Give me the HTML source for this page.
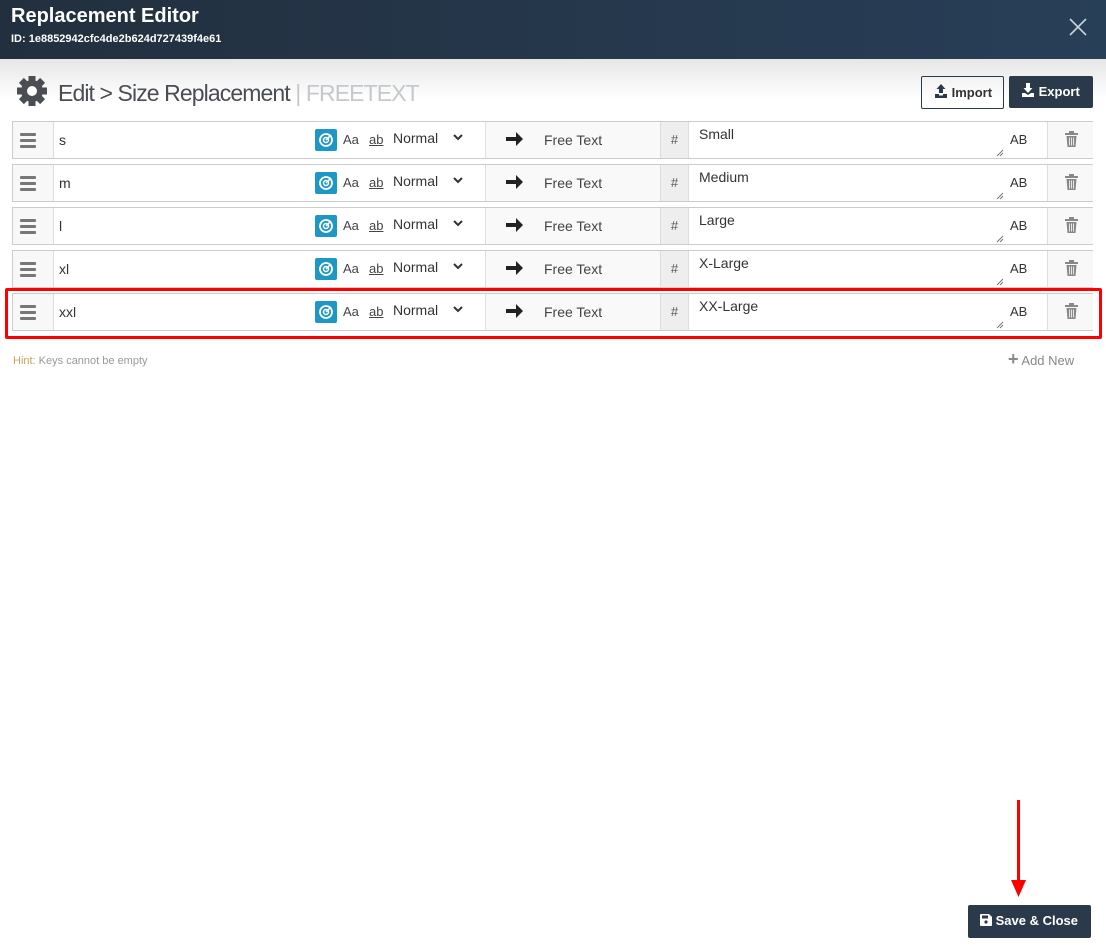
<!DOCTYPE html>
<html><head><meta charset="utf-8"><style>
*{box-sizing:border-box;margin:0;padding:0}
body{width:1106px;height:950px;position:relative;background:#fff;font-family:"Liberation Sans",Arial,sans-serif;overflow:hidden;color:#333}
.hdr{position:absolute;left:0;top:0;width:1106px;height:59px;background:linear-gradient(90deg,#222f3e,#283f58)}
.shadow{position:absolute;left:0;top:59px;width:1106px;height:40px;background:linear-gradient(#e6e6e6,#fff)}
.a{position:absolute}
.row{position:absolute;left:12px;width:1081px;height:38px;border:1px solid #ccc;background:#fff}
.row>div{position:absolute;top:0;height:36px}
.drag{left:0;width:41px;border-right:1px solid #ddd;background:#f8f8f8}
.drag i{position:absolute;left:7px;width:16px;height:3px;background:#777;border-radius:1px}
.key{left:41px;width:432px;border-right:1px solid #ddd;font-size:14px}
.arr{left:473px;width:175px;background:#f9f9f9;border-right:1px solid #ddd}
.hash{left:648px;width:28px;background:#eee;border-right:1px solid #ddd;font-size:13px;color:#555;text-align:center;line-height:36px}
.val{left:676px;width:359px;border-right:1px solid #ddd;font-size:14px;color:#333}
.del{left:1035px;width:45px;background:#f8f8f8}
</style></head><body>
<div class="hdr"></div>
<div class="a" style="left:11px;top:5px;color:#fff;font-weight:bold;font-size:20px">Replacement Editor</div>
<div class="a" style="left:11px;top:33px;color:#fff;font-weight:bold;font-size:11px">ID: 1e8852942cfc4de2b624d727439f4e61</div>
<svg class="a" style="left:1069px;top:18px" width="18" height="18"><path d="M1 1L17 17M17 1L1 17" stroke="#c8d0d8" stroke-width="1.6"/></svg>
<div class="shadow"></div>

<svg class="a" style="left:16px;top:75px" width="32" height="32" viewBox="0 0 32 32"><g fill="#4a4d52" transform="translate(16 16)"><circle r="11"/><rect x="-3.5" y="-15" width="7" height="30"/><rect x="-3.5" y="-15" width="7" height="30" transform="rotate(45)"/><rect x="-3.5" y="-15" width="7" height="30" transform="rotate(90)"/><rect x="-3.5" y="-15" width="7" height="30" transform="rotate(135)"/><circle r="5" fill="#fff"/></g></svg>
<div class="a" style="left:58px;top:80px;font-size:23px;color:#4a4d52;letter-spacing:-0.9px">Edit &gt; Size Replacement <span style="color:#c5c9cc">| FREETEXT</span></div>

<div class="a" style="left:921px;top:76px;width:83px;height:33px;border:1px solid #2b3a4a;border-radius:2px;font-size:13px;font-weight:bold;color:#333;line-height:31px;padding-left:12px">
<svg width="14" height="14" viewBox="0 0 14 14" style="vertical-align:-1px"><path d="M7 0L2.5 5H5v4h4V5h2.5z M1 10h4v1.5h4V10h4v4H1z" fill="#2b3a4a"/></svg> Import</div>
<div class="a" style="left:1009px;top:76px;width:84px;height:32px;background:#2b3a4a;border-radius:2px;font-size:13px;font-weight:bold;color:#fff;line-height:32px;padding-left:12px">
<svg width="14" height="14" viewBox="0 0 14 14" style="vertical-align:-1px"><path d="M5 0h4v5h2.5L7 10 2.5 5H5z M1 10h3l3 2 3-2h3v4H1z" fill="#fff"/></svg> Export</div>

<div id="rows"></div>
<script>
var d=[["s","Small"],["m","Medium"],["l","Large"],["xl","X-Large"],["xxl","XX-Large"]],h="";
for(var i=0;i<5;i++){var t=121+43*i;
h+='<div class="row" style="top:'+t+'px"><div class="drag"><i style="top:11px"></i><i style="top:17px"></i><i style="top:23px"></i></div>'+
'<div class="key"><span class="a" style="left:5px;top:10px">'+d[i][0]+'</span>'+
'<span class="a" style="left:261px;top:7px;width:22px;height:22px;background:#1f97c4;border-radius:2px"><svg width="22" height="22"><circle cx="11" cy="11" r="6" fill="none" stroke="#fff" stroke-width="1.8"/><circle cx="11" cy="11" r="2.5" fill="none" stroke="#fff" stroke-width="1.5"/><path d="M11 11L16 6" stroke="#fff" stroke-width="1.5"/></svg></span>'+
'<span class="a" style="left:289px;top:10px;font-size:13px;color:#444">Aa</span>'+
'<span class="a" style="left:315px;top:10px;font-size:13px;color:#444;text-decoration:underline">ab</span>'+
'<span class="a" style="left:339px;top:8px;font-size:14px;color:#333">Normal</span>'+
'<svg class="a" style="left:398px;top:11px" width="12" height="10"><path d="M2 2l4 4 4-4" fill="none" stroke="#333" stroke-width="2"/></svg></div>'+
'<div class="arr"><svg class="a" style="left:20px;top:9px" width="18" height="16"><path d="M0 6h10V1l7 7-7 7v-5H0z" fill="#222"/></svg><span class="a" style="left:58px;top:10px;font-size:14px;color:#444">Free Text</span></div>'+
'<div class="hash">#</div>'+
'<div class="val"><span class="a" style="left:10px;top:4px">'+d[i][1]+'</span><span class="a" style="left:321px;top:10px;font-size:13px">AB</span>'+
'<svg class="a" style="left:307px;top:27px" width="8" height="8"><path d="M1 7L7 1M4 7L7 4" stroke="#777" stroke-width="1"/></svg></div>'+
'<div class="del"><svg class="a" style="left:17px;top:9px" width="13" height="16"><rect x="0" y="2" width="13" height="2" fill="#888"/><rect x="4" y="0" width="5" height="2" fill="#888"/><path d="M1.5 5h10l-1 11h-8z" fill="#888"/><path d="M4.5 6.5v8M6.5 6.5v8M8.5 6.5v8" stroke="#fff" stroke-width=".8"/></svg></div></div>';}
document.getElementById("rows").innerHTML=h;
</script>
<div class="a" style="left:5px;top:288px;width:1097px;height:51px;border:3px solid #f00;border-radius:2px"></div>

<div class="a" style="left:13px;top:355px;font-size:11px;color:#999"><span style="color:#c8a060">Hint:</span> Keys cannot be empty</div>
<div class="a" style="left:1008px;top:349px;font-size:13px;color:#888"><span style="font-weight:bold;font-size:18px;color:#888">+</span> Add New</div>

<div class="a" style="left:1017px;top:800px;width:3px;height:82px;background:#f00"></div>
<svg class="a" style="left:1011px;top:880px" width="15" height="18"><path d="M0 0h15L7.5 17z" fill="#f00"/></svg>
<div class="a" style="left:968px;top:905px;width:123px;height:33px;background:#2b3a4a;border-radius:2px;color:#fff;font-size:13px;font-weight:bold;line-height:32px;padding-left:12px">
<svg width="12" height="12" viewBox="0 0 12 12" style="vertical-align:-1px"><path d="M0 1a1 1 0 0 1 1-1h8l3 3v8a1 1 0 0 1-1 1H1a1 1 0 0 1-1-1z" fill="#fff"/><rect x="2" y="1.5" width="6" height="3" fill="#2b3a4a"/><circle cx="6" cy="8" r="1.6" fill="#2b3a4a"/></svg> Save &amp; Close</div>
</body></html>
